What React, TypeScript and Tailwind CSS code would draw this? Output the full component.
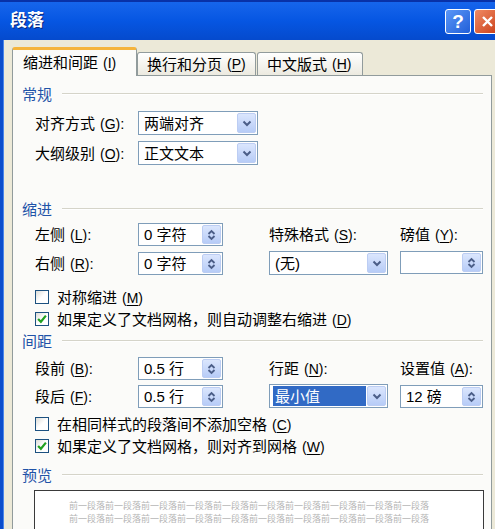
import React from 'react';

const FONT = "font-['Liberation_Sans','Noto_Sans_CJK_SC',sans-serif]";

function Key({ k }: { k: string }) {
  return (
    <span className="ml-[5px] text-[14px]">
      (<span className="underline underline-offset-2">{k}</span>)
    </span>
  );
}

function Heading({ text, className = '' }: { text: string; className?: string }) {
  return (
    <div className={`flex h-[16px] items-center pl-[9px] pr-[8px] ${className}`}>
      <span className="text-[15px] leading-none text-[#1f53a8]">{text}</span>
      <div className="ml-[10px] h-[2px] flex-1 border-t border-b border-t-[#d5d4c9] border-b-white" />
    </div>
  );
}

function Chevron() {
  return (
    <svg width="10" height="7" viewBox="0 0 10 7">
      <path d="M1.5 1.5 L5 5 L8.5 1.5" stroke="#4b5e88" strokeWidth="2" fill="none" />
    </svg>
  );
}

function SpinArrows() {
  return (
    <svg width="9" height="12" viewBox="0 0 9 12">
      <path d="M1.5 5 L4.5 2 L7.5 5" stroke="#4b5e88" strokeWidth="1.8" fill="none" />
      <path d="M1.5 7 L4.5 10 L7.5 7" stroke="#4b5e88" strokeWidth="1.8" fill="none" />
    </svg>
  );
}

function DropButton({ children }: { children: React.ReactNode }) {
  return (
    <div className="flex w-[19px] items-center justify-center rounded-[2px] border border-[#bccdf3] bg-gradient-to-b from-[#dbe6fd] to-[#b7ccf7]">
      {children}
    </div>
  );
}

function Select({ value, w, selected = false }: { value: string; w: string; selected?: boolean }) {
  return (
    <div className={`flex h-[24px] items-stretch border border-[#7f9db9] bg-white p-px ${w}`}>
      <div className="flex flex-1 items-center pr-[1px] text-[15px] leading-none">
        {selected ? (
          <span className="ml-[2px] flex h-full w-full items-center bg-[#316ac5] pl-[2px] text-white">{value}</span>
        ) : (
          <span className="pl-[4px]">{value}</span>
        )}
      </div>
      <DropButton>
        <Chevron />
      </DropButton>
    </div>
  );
}

function Spinner({ value, w }: { value: string; w: string }) {
  return (
    <div className={`flex h-[23px] items-stretch border border-[#7f9db9] bg-white p-px ${w}`}>
      <div className="flex flex-1 items-center pl-[4px] text-[15px] leading-none">
        <span className="whitespace-pre">{value}</span>
      </div>
      <DropButton>
        <SpinArrows />
      </DropButton>
    </div>
  );
}

function Check({ checked, children, className = '' }: { checked?: boolean; children: React.ReactNode; className?: string }) {
  return (
    <div className={`flex h-[20px] items-center pl-[22px] ${className}`}>
      <div className="flex h-[14px] w-[14px] items-center justify-center border border-[#1c5180] bg-gradient-to-br from-[#dcdcd7] via-white to-white">
        {checked && (
          <svg width="10" height="10" viewBox="0 0 9 9">
            <path d="M1 4.5 L3.5 7 L8 1.5" stroke="#21a121" strokeWidth="2" fill="none" />
          </svg>
        )}
      </div>
      <span className="ml-[8px] text-[15px] leading-none">{children}</span>
    </div>
  );
}

function FieldLabel({ children }: { children: React.ReactNode }) {
  return <div className="w-[103px] shrink-0 text-[15px] leading-none">{children}</div>;
}

const PREVIEW = '前一段落'.repeat(10);

export default function App() {
  return (
    <div className={`relative h-[529px] w-[495px] overflow-hidden bg-[#ece9d8] text-black ${FONT}`}>
      <div className="w-[505px]">
        {/* title bar */}
        <div className="flex h-[40px] items-center border-t-2 border-[#0831a8] bg-gradient-to-b from-[#1665ec] via-[#0656e2] to-[#054acd] pl-[10px]">
          <span className="text-[17px] font-bold text-white [text-shadow:1px_1px_#0a2a80]">段落</span>
          <div className="ml-auto mr-[5px] flex gap-[3px]">
            <div className="flex h-[25px] w-[26px] items-center justify-center rounded-[3px] border border-white bg-gradient-to-br from-[#5b97f7] to-[#215ed8] text-[19px] font-bold leading-none text-white">
              ?
            </div>
            <div className="flex h-[25px] w-[26px] items-center justify-center rounded-[3px] border border-white bg-gradient-to-br from-[#f08a62] to-[#c93c12]">
              <svg width="13" height="13" viewBox="0 0 13 13">
                <path d="M2 2 L11 11 M11 2 L2 11" stroke="white" strokeWidth="2.4" />
              </svg>
            </div>
          </div>
        </div>

        <div className="flex">
          <div className="w-[4px] shrink-0 border-r border-[#4a86ea] bg-[#0b4dcc]" />
          <div className="flex-1 pl-[8px]">
            {/* tabs */}
            <div className="relative z-10 flex h-[35px] items-end">
              <div className="-mb-px flex h-[29px] w-[125px] items-start rounded-t-[3px] border-x border-t-[3px] border-x-[#919b9c] border-t-[#f5b43c] bg-[#fbfbf9] pl-[10px] pt-[4px] text-[15px] leading-none">
                <span className="mt-[1px]">缩进和间距<Key k="I" /></span>
              </div>
              <div className="flex h-[23px] w-[119px] items-center rounded-t-[3px] border-x border-t border-[#919b9c] bg-gradient-to-b from-white to-[#eceae0] pl-[9px] text-[15px] leading-none">
                换行和分页<Key k="P" />
              </div>
              <div className="ml-px flex h-[23px] w-[106px] items-center rounded-t-[3px] border-x border-t border-[#919b9c] bg-gradient-to-b from-white to-[#eceae0] pl-[9px] text-[15px] leading-none">
                中文版式<Key k="H" />
              </div>
            </div>

            {/* panel */}
            <div className="h-[470px] w-[480px] border border-[#919b9c] bg-[#fbfbf9]">
              <Heading text="常规" className="mt-[10px]" />
              <div className="mt-[9px] flex items-center pl-[22px]">
                <FieldLabel>对齐方式<Key k="G" />:</FieldLabel>
                <Select value="两端对齐" w="w-[120px]" />
              </div>
              <div className="mt-[6px] flex items-center pl-[22px]">
                <FieldLabel>大纲级别<Key k="O" />:</FieldLabel>
                <Select value="正文文本" w="w-[120px]" />
              </div>

              <Heading text="缩进" className="mt-[36px]" />
              <div className="mt-[6px] flex pl-[22px]">
                <div className="flex w-[234px] flex-col gap-[6px]">
                  <div className="flex items-center">
                    <FieldLabel>左侧<Key k="L" />:</FieldLabel>
                    <Spinner value="0 字符" w="w-[85px]" />
                  </div>
                  <div className="flex items-center">
                    <FieldLabel>右侧<Key k="R" />:</FieldLabel>
                    <Spinner value="0 字符" w="w-[85px]" />
                  </div>
                </div>
                <div className="flex gap-[12px]">
                  <div className="flex flex-col">
                    <div className="flex h-[23px] items-center text-[15px] leading-none">特殊格式<Key k="S" />:</div>
                    <div className="mt-[5px]">
                      <Select value="(无)" w="w-[119px]" />
                    </div>
                  </div>
                  <div className="flex flex-col">
                    <div className="flex h-[23px] items-center text-[15px] leading-none">磅值<Key k="Y" />:</div>
                    <div className="mt-[5px]">
                      <Spinner value="" w="w-[83px]" />
                    </div>
                  </div>
                </div>
              </div>

              <Check className="mt-[12px]">对称缩进<Key k="M" /></Check>
              <Check checked className="mt-[2px]">如果定义了文档网格，则自动调整右缩进<Key k="D" /></Check>

              <Heading text="间距" className="mt-[4px]" />
              <div className="mt-[8px] flex pl-[22px]">
                <div className="flex w-[234px] flex-col gap-[5px]">
                  <div className="flex items-center">
                    <FieldLabel>段前<Key k="B" />:</FieldLabel>
                    <Spinner value="0.5 行" w="w-[85px]" />
                  </div>
                  <div className="flex items-center">
                    <FieldLabel>段后<Key k="F" />:</FieldLabel>
                    <Spinner value="0.5 行" w="w-[85px]" />
                  </div>
                </div>
                <div className="flex gap-[12px]">
                  <div className="flex flex-col">
                    <div className="flex h-[23px] items-center text-[15px] leading-none">行距<Key k="N" />:</div>
                    <div className="mt-[4px]">
                      <Select value="最小值" w="w-[119px]" selected />
                    </div>
                  </div>
                  <div className="flex flex-col">
                    <div className="flex h-[23px] items-center text-[15px] leading-none">设置值<Key k="A" />:</div>
                    <div className="mt-[5px]">
                      <Spinner value="12 磅" w="w-[83px]" />
                    </div>
                  </div>
                </div>
              </div>

              <Check className="mt-[6px]">在相同样式的段落间不添加空格<Key k="C" /></Check>
              <Check checked className="mt-[2px]">如果定义了文档网格，则对齐到网格<Key k="W" /></Check>

              <Heading text="预览" className="mt-[11px]" />
              <div className="ml-[21px] mt-[7px] h-[120px] w-[450px] border border-[#3a3a3a] bg-white pl-[34px] pt-[9px]">
                <div className="text-[9px] leading-[13px] text-[#b5b5b5]">{PREVIEW}</div>
                <div className="text-[9px] leading-[13px] text-[#b5b5b5]">{PREVIEW}</div>
              </div>
            </div>
          </div>
        </div>
      </div>
    </div>
  );
}
